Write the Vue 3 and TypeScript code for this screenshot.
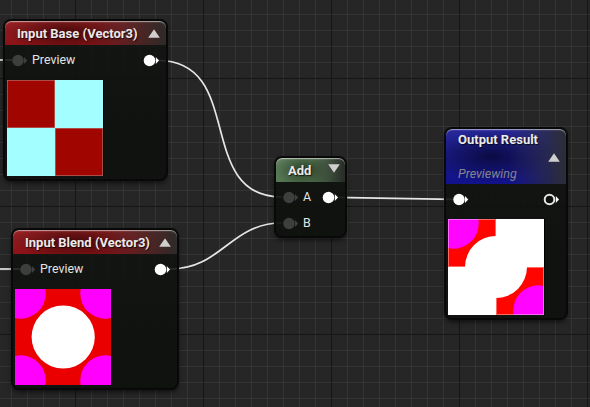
<script setup lang="ts">
interface Pin {
  label?: string
  state: 'dim' | 'linked' | 'open'
}

interface Row {
  input: Pin
  output?: Pin
}

interface GraphNode {
  id: string
  title: string
  subtitle?: string
  tone: 'red' | 'green' | 'blue'
  arrow: 'up' | 'down'
  x: number
  y: number
  width: number
  height: number
  rows: Row[]
  preview?: 'checker' | 'circles' | 'result'
}

const nodes: GraphNode[] = [
  {
    id: 'base', title: 'Input Base (Vector3)', tone: 'red', arrow: 'up',
    x: 4, y: 20, width: 163, height: 160, preview: 'checker',
    rows: [{ input: { label: 'Preview', state: 'dim' }, output: { state: 'linked' } }],
  },
  {
    id: 'blend', title: 'Input Blend (Vector3)', tone: 'red', arrow: 'up',
    x: 12, y: 229, width: 166, height: 160, preview: 'circles',
    rows: [{ input: { label: 'Preview', state: 'dim' }, output: { state: 'linked' } }],
  },
  {
    id: 'add', title: 'Add', tone: 'green', arrow: 'down',
    x: 275, y: 157, width: 71, height: 80,
    rows: [
      { input: { label: 'A', state: 'dim' }, output: { state: 'linked' } },
      { input: { label: 'B', state: 'dim' } },
    ],
  },
  {
    id: 'result', title: 'Output Result', subtitle: 'Previewing', tone: 'blue', arrow: 'up',
    x: 445, y: 128, width: 122, height: 191, preview: 'result',
    rows: [{ input: { state: 'linked' }, output: { state: 'open' } }],
  },
]

const wires: string[] = [
  'M0 60H12',
  'M0 269H20',
  'M158 60.5C246 60.5 194 197 282 197',
  'M170 269C222 269 230 223 282 223',
  'M334 197.3L453 199.3',
]
</script>

<template>
  <main class="graph">
    <svg class="wires" width="590" height="407" viewBox="0 0 590 407">
      <path v-for="wire in wires" :key="wire" :d="wire" />
    </svg>

    <section
      v-for="node in nodes"
      :key="node.id"
      class="node"
      :class="[node.tone, node.id]"
      :style="{ left: node.x + 'px', top: node.y + 'px', width: node.width + 'px', height: node.height + 'px' }"
    >
      <header class="head">
        <div class="titles">
          <h2>{{ node.title }}</h2>
          <p v-if="node.subtitle">{{ node.subtitle }}</p>
        </div>
        <svg class="arrow" width="12" height="9" viewBox="0 0 12 9">
          <path :d="node.arrow === 'up' ? 'M6 .2 11.8 8.7H.2Z' : 'M.2 .3H11.8L6 8.8Z'" />
        </svg>
      </header>

      <div class="rows">
        <div v-for="(row, i) in node.rows" :key="i" class="row">
          <svg class="pin" :class="row.input.state" width="16" height="13" viewBox="0 0 16 13">
            <path d="M12 3 15.300 6.500 12 10Z" />
            <circle cx="6" cy="6.5" r="5.700" />
          </svg>
          <span class="label">{{ row.input.label }}</span>
          <svg v-if="row.output" class="pin" :class="row.output.state" width="17" height="13" viewBox="0 0 17 13">
            <path d="M12.800 3 16 6.500 12.800 10Z" />
            <circle cx="6.500" cy="6.5" :r="row.output.state === 'open' ? 4.8 : 5.8" />
          </svg>
        </div>
      </div>

      <svg v-if="node.preview" class="preview" width="96" height="96" viewBox="0 0 96 96">
        <g v-if="node.preview === 'checker'">
          <rect width="96" height="96" fill="#a3ffff" />
          <path d="M.5 .5H47.5V47.5H.5ZM48.5 48.5H95.5V95.5H48.5Z" fill="#a00500" stroke="#b04a46" />
        </g>
        <g v-else-if="node.preview === 'circles'">
          <rect width="96" height="96" fill="#ea0000" />
          <g fill="#ff00ff">
            <circle cx="5.500" cy="4.500" r="25.200" />
            <circle cx="90.500" cy="4.500" r="25.200" />
            <circle cx="5.500" cy="91.500" r="25.200" />
            <circle cx="90.500" cy="91.500" r="25.200" />
          </g>
          <circle cx="48.2" cy="48" r="31.6" fill="#fff" />
        </g>
        <g v-else>
          <rect width="96" height="96" fill="#fff" />
          <path d="M0 0H48V17A31 31 0 0 0 17 48H0ZM96 96H48V79A31 31 0 0 0 79 48H96Z" fill="#ff0500" />
          <g fill="#ff05ff">
            <circle cx="5.500" cy="4.500" r="25.200" />
            <circle cx="90.500" cy="91.500" r="25.200" />
          </g>
          <path d="M17 47.5H.5V.5H47.5V17M79 48.5H95.5V95.5H48.5V79" fill="none" stroke="#fff" stroke-opacity=".4" />
        </g>
      </svg>
    </section>
  </main>
</template>

<style>
body {
  margin: 0;
  background: #262626;
}
</style>

<style scoped>
.graph {
  position: relative;
  width: 590px;
  height: 407px;
  overflow: hidden;
  font-family: Roboto, "Liberation Sans", sans-serif;
  background-color: #262626;
  background-image:
    linear-gradient(#161616 1px, transparent 1px),
    linear-gradient(90deg, #161616 1px, transparent 1px),
    linear-gradient(#343434 1px, transparent 1px),
    linear-gradient(90deg, #343434 1px, transparent 1px);
  background-size: 128px 128px, 128px 128px, 16px 16px, 16px 16px;
  background-position: 75px 78px, 75px 78px, 11px 14px, 11px 14px;
}

.wires {
  position: absolute;
  inset: 0;
}

.wires path {
  fill: none;
  stroke: #e6e6e6;
  stroke-width: 1.7;
}

.node {
  position: absolute;
  box-sizing: border-box;
  display: flex;
  flex-direction: column;
  padding: 1px;
  border-radius: 7px;
  background: linear-gradient(rgba(16, 18, 16, .82), rgba(14, 17, 14, .95) 65%);
  box-shadow: 0 0 0 1px #090909, inset 0 0 0 1px #080808, 0 3px 5px rgba(0, 0, 0, .6);
}

.head {
  box-sizing: border-box;
  flex: none;
  height: 24px;
  display: flex;
  justify-content: space-between;
  align-items: flex-start;
  padding: 5px 6px 0 12px;
  border-radius: 6px 6px 0 0;
  box-shadow: inset 0 1px 0 rgba(255, 255, 255, .45), inset 0 2px 1px rgba(255, 255, 255, .1);
}

.red .head {
  background:
    linear-gradient(90deg, transparent 52%, rgba(43, 43, 41, .95) 98%),
    radial-gradient(ellipse 38% 75% at 38% 50%, rgba(65, 8, 8, .95), transparent),
    linear-gradient(#922024, #8b1216);
}

.green .head {
  padding-right: 5px;
  background:
    linear-gradient(90deg, transparent 50%, rgba(38, 41, 37, .95) 98%),
    radial-gradient(ellipse 42% 75% at 40% 50%, rgba(39, 61, 36, .95), transparent),
    linear-gradient(#628260, #557752);
}

.blue .head {
  height: 55px;
  padding: 4px 6px 0 12px;
  background:
    linear-gradient(90deg, transparent 52%, rgba(45, 46, 53, .95) 98%),
    radial-gradient(ellipse 55% 48% at 38% 50%, rgba(10, 10, 65, .98), transparent),
    linear-gradient(#272799, #11118b);
}

h2,
p {
  margin: 0;
  white-space: nowrap;
}

h2 {
  font-size: 13px;
  line-height: 16px;
  font-weight: 700;
  color: #ebe9e9;
  text-shadow: 1px 1px 1px rgba(0, 0, 0, .7);
}

.blue h2 {
  margin-top: -1px;
}

p {
  margin-top: 18px;
  font-size: 12.5px;
  line-height: 16px;
  font-style: italic;
  color: #85858e;
}

.arrow {
  flex: none;
  margin-top: 3px;
  fill: #d0cece;
}

.green .arrow {
  margin-top: 1px;
}

.blue .arrow {
  margin-top: 20px;
}

.rows {
  padding: 8px 6px 0 7px;
}

.row {
  display: flex;
  align-items: center;
  height: 14px;
}

.row + .row {
  margin-top: 12px;
}

.label {
  flex: 1;
  padding-left: 4px;
  font-size: 12.4px;
  line-height: 14px;
  color: #e4e4e4;
}

.pin {
  flex: none;
  fill: #fff;
}

.pin.dim {
  fill: #3d3e3d;
}

.open circle {
  fill: #0d100d;
  stroke: #e6e6e6;
  stroke-width: 2;
}

.preview {
  flex: none;
  display: block;
  margin: 13px 0 0 2px;
  box-shadow: 1px 0 0 #000;
}
</style>
